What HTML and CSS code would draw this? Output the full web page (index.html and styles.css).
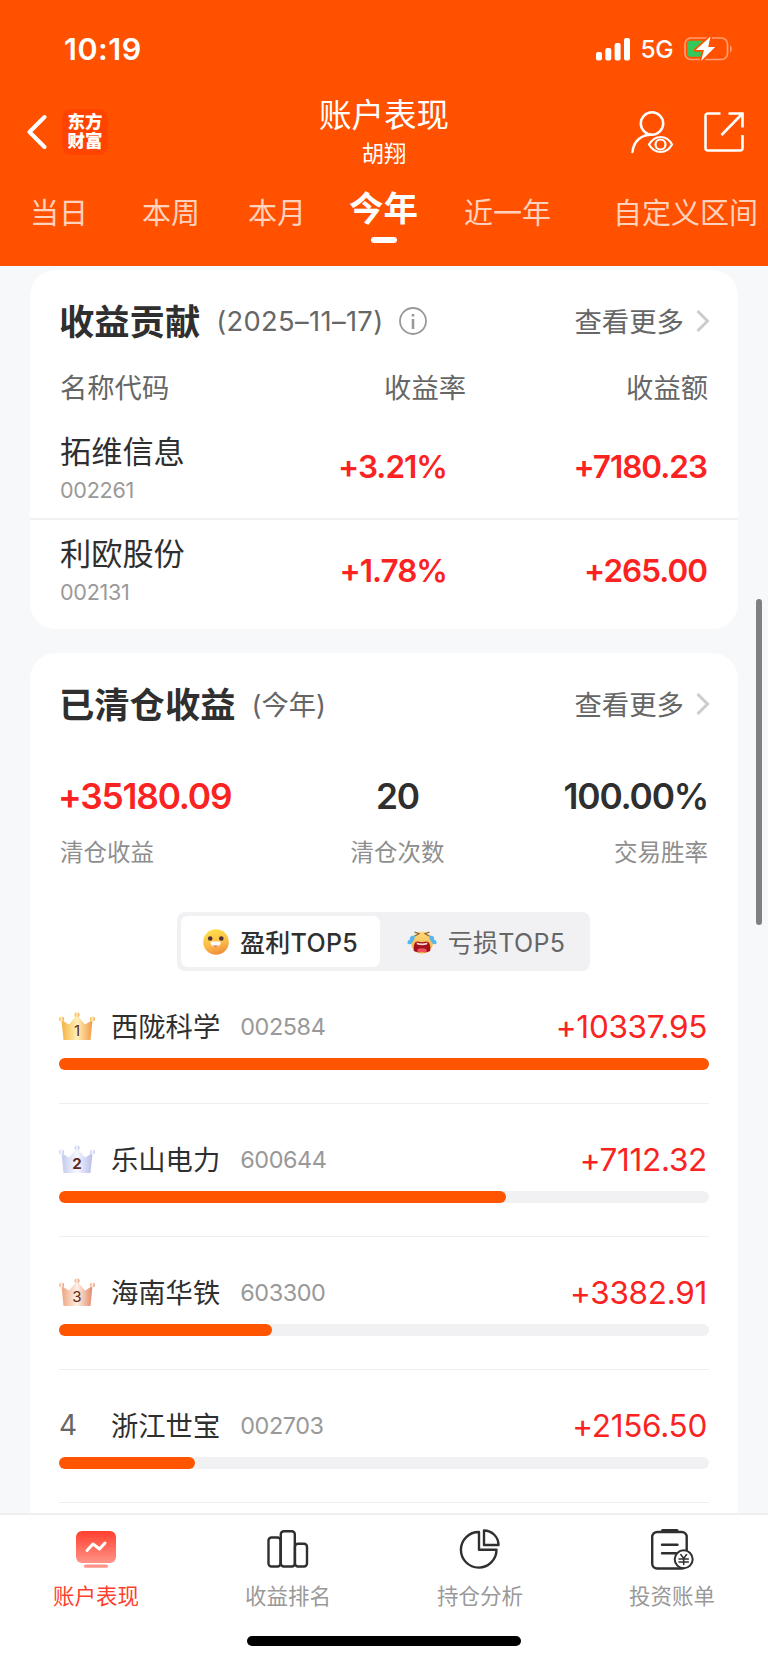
FILE: index.html
```html
<!DOCTYPE html>
<html lang="zh-CN">
<head>
    <meta charset="UTF-8">
    <meta name="viewport" content="width=device-width, initial-scale=1.0">
    <title>账户表现</title>
    <link rel="stylesheet" href="styles.css">
</head>
<body>

<div class="header">
    <div class="status-bar">
        <span class="time">10:19</span>
        <div class="status-right">
            <svg class="signal" width="34" height="23" viewBox="0 0 34 23" fill="#fff">
                <rect x="0" y="14" width="6" height="8.5" rx="2"/>
                <rect x="9.3" y="10" width="6" height="12.5" rx="2"/>
                <rect x="18.6" y="5" width="6" height="17.5" rx="2"/>
                <rect x="28" y="0" width="6" height="22.5" rx="2"/>
            </svg>
            <span class="network">5G</span>
            <svg class="battery" width="50" height="26" viewBox="0 0 50 26">
                <rect x="1" y="2" width="42.5" height="21.5" rx="6" fill="none" stroke="#fff" stroke-opacity=".45" stroke-width="1.7"/>
                <path d="M46 9.5c2.4 .8 2.4 6 0 7z" fill="#fff" fill-opacity=".45"/>
                <rect x="3.2" y="4.8" width="17" height="16" rx="3" fill="#34c759"/>
                <path d="M26.5 .5L11.7 14h8.2l-2.8 11L31.2 11h-7z" fill="#fff" stroke="#ff5100" stroke-width="3.4" stroke-linejoin="round" paint-order="stroke"/>
            </svg>
        </div>
    </div>

    <div class="title-bar">
        <div class="title-left">
            <svg width="20" height="36" viewBox="0 0 20 36" fill="none" stroke="#fff" stroke-width="4" stroke-linecap="round" stroke-linejoin="round">
                <path d="M17.5 3L2.5 18l15 15"/>
            </svg>
            <div class="logo">东方<br>财富</div>
        </div>
        <div class="title-center">
            <h1>账户表现</h1>
            <p>胡翔</p>
        </div>
        <div class="title-right">
            <svg width="44" height="44" viewBox="0 0 44 44" fill="none" stroke="#fff" stroke-width="2.5" stroke-linecap="round">
                <circle cx="22" cy="13.5" r="11.2"/>
                <path d="M2.5 42C3.5 31 11.5 24.7 21 24.7"/>
                <path d="M19 34.5C25 24.5 36.5 24.5 42 34.5C36.5 44.5 25 44.5 19 34.5z" stroke-width="2.2"/>
                <circle cx="30.5" cy="34.5" r="5" stroke-width="2.2"/>
            </svg>
            <svg width="40" height="40" viewBox="0 0 40 40" fill="none" stroke="#fff" stroke-width="2.6">
                <path d="M16.5 1.5H4Q1.5 1.5 1.5 4V36Q1.5 38.5 4 38.5H36Q38.5 38.5 38.5 36V23"/>
                <path d="M24.5 1.5H38.5V15.5M38 2L17.5 23"/>
            </svg>
        </div>
    </div>

    <div class="tabs">
        <span class="tab">当日</span>
        <span class="tab tab-week">本周</span>
        <span class="tab tab-month">本月</span>
        <span class="tab active">今年</span>
        <span class="tab tab-last-year">近一年</span>
        <span class="tab tab-custom">自定义区间</span>
    </div>
</div>

<div class="content">
    <div class="card contribution">
        <div class="card-head">
            <h2>收益贡献</h2>
            <span class="date">(2025–11–17)</span>
            <svg class="info" width="28" height="28" viewBox="0 0 28 28" fill="none" stroke="#999">
                <circle cx="14" cy="14" r="13" stroke-width="1.8"/>
                <path d="M14 12v10" stroke-width="2.6"/>
                <path d="M14 7v2.5" stroke-width="2.6"/>
            </svg>
            <span class="more">查看更多</span>
            <svg class="chevron" width="14" height="22" viewBox="0 0 14 22" fill="none" stroke="#ccc" stroke-width="3">
                <path d="M1.5 1L11.5 11l-10 10"/>
            </svg>
        </div>
        <div class="table-head">
            <span>名称代码</span>
            <span>收益率</span>
            <span>收益额</span>
        </div>
        <div class="stock">
            <div>
                <p class="stock-name">拓维信息</p>
                <p class="stock-code">002261</p>
            </div>
            <span class="stock-value">+3.21%</span>
            <span class="stock-value">+7180.23</span>
        </div>
        <div class="stock">
            <div>
                <p class="stock-name">利欧股份</p>
                <p class="stock-code">002131</p>
            </div>
            <span class="stock-value">+1.78%</span>
            <span class="stock-value">+265.00</span>
        </div>
    </div>

    <div class="card cleared">
        <div class="card-head">
            <h2>已清仓收益</h2>
            <span class="date">(今年)</span>
            <span class="more">查看更多</span>
            <svg class="chevron" width="14" height="22" viewBox="0 0 14 22" fill="none" stroke="#ccc" stroke-width="3">
                <path d="M1.5 1L11.5 11l-10 10"/>
            </svg>
        </div>
        <div class="stats">
            <div class="stat">
                <p class="stat-value red">+35180.09</p>
                <p class="stat-label">清仓收益</p>
            </div>
            <div class="stat center">
                <p class="stat-value">20</p>
                <p class="stat-label">清仓次数</p>
            </div>
            <div class="stat right">
                <p class="stat-value">100.00%</p>
                <p class="stat-label">交易胜率</p>
            </div>
        </div>

        <div class="switch">
            <div class="switch-item on">
                <svg width="26" height="26" viewBox="0 0 26 26">
                    <defs>
                        <linearGradient id="smile" x1=".35" y1="0" x2=".65" y2="1">
                            <stop offset="0" stop-color="#ffe04a"/>
                            <stop offset=".55" stop-color="#fcbc48"/>
                            <stop offset="1" stop-color="#f08a3c"/>
                        </linearGradient>
                    </defs>
                    <circle cx="13" cy="13" r="12.8" fill="url(#smile)"/>
                    <circle cx="7.2" cy="9.5" r="2.3" fill="#4a3038"/>
                    <circle cx="18.3" cy="9.5" r="2.3" fill="#4a3038"/>
                    <path d="M7.4 12.4H17.8Q17.6 18 12.6 18T7.4 12.4z" fill="#fff"/>
                    <path d="M9.2 16.5H16Q12.6 19.4 9.2 16.5z" fill="#f0604c"/>
                </svg>
                <span>盈利TOP5</span>
            </div>
            <div class="switch-item off">
                <svg width="30" height="26" viewBox="0 0 30 26">
                    <defs>
                        <linearGradient id="cry" x1="0" y1="0" x2="0" y2="1">
                            <stop offset="0" stop-color="#ffdd7b"/>
                            <stop offset="1" stop-color="#f3a83c"/>
                        </linearGradient>
                    </defs>
                    <circle cx="15" cy="13.5" r="11" fill="url(#cry)"/>
                    <path d="M7.5 3l4.5 1.7-4 2.3M22.5 3l-4.5 1.7 4 2.3" fill="none" stroke="#8a6250" stroke-width="1.3"/>
                    <path d="M6.8 22Q6 12 11 12.5Q15 14 19 12.5Q24 12 23.2 22Q19 24 15 22.8Q11 24 6.8 22z" fill="#a3121c"/>
                    <path d="M9.5 13.5Q15 15.5 20.5 13.5L20 15.5Q15 17 10 15.5z" fill="#f7d9d2"/>
                    <path d="M10 22.5Q10.500 18.6 15 19.4Q19.500 18.6 20 22.5Q15 23.5 10 22.5z" fill="#f0525a"/>
                    <path d="M8 6.5Q1.5 6.5 3.2 10.5Q-.5 11.5 .8 15Q4 16 5.3 13.5Q8 10.5 8 6.5zM22 6.5Q28.500 6.5 26.8 10.5Q30.500 11.5 29.2 15Q26 16 24.7 13.5Q22 10.5 22 6.500z" fill="#55b5f2"/>
                </svg>
                <span>亏损TOP5</span>
            </div>
        </div>

        <!-- shared crown shape, coloured per rank -->
        <svg class="defs" width="0" height="0">
            <defs>
                <linearGradient id="gold"><stop offset="0" stop-color="#f5b13e"/><stop offset=".5" stop-color="#fff0b8"/><stop offset="1" stop-color="#f39a45"/></linearGradient>
                <linearGradient id="silver"><stop offset="0" stop-color="#c3c9ec"/><stop offset=".5" stop-color="#f6f8ff"/><stop offset="1" stop-color="#b9bde9"/></linearGradient>
                <linearGradient id="bronze"><stop offset="0" stop-color="#eba480"/><stop offset=".5" stop-color="#fff0e4"/><stop offset="1" stop-color="#e28a68"/></linearGradient>
                <g id="crown">
                    <path d="M2.5 8L10 12.5L18 3L26 12.5L33.5 8L31.5 28H4.5z"/>
                    <circle cx="18" cy="2.7" r="2.5"/>
                    <circle cx="2.6" cy="7" r="2.5"/>
                    <circle cx="33.4" cy="7" r="2.5"/>
                </g>
            </defs>
        </svg>

        <div class="rank">
            <div class="rank-row">
                <div class="rank-no">
                    <svg width="36" height="29" viewBox="0 0 36 29"><use href="#crown" fill="url(#gold)"/><text x="18" y="23.5">1</text></svg>
                </div>
                <span class="rank-name">西陇科学</span>
                <span class="rank-code">002584</span>
                <span class="rank-value">+10337.95</span>
            </div>
            <div class="bar"><div class="fill" style="width: 100%"></div></div>
        </div>
        <div class="rank">
            <div class="rank-row">
                <div class="rank-no">
                    <svg width="36" height="29" viewBox="0 0 36 29"><use href="#crown" fill="url(#silver)"/><text x="18" y="23.5" class="heavy">2</text></svg>
                </div>
                <span class="rank-name">乐山电力</span>
                <span class="rank-code">600644</span>
                <span class="rank-value">+7112.32</span>
            </div>
            <div class="bar"><div class="fill" style="width: 68.8%"></div></div>
        </div>
        <div class="rank">
            <div class="rank-row">
                <div class="rank-no">
                    <svg width="36" height="29" viewBox="0 0 36 29"><use href="#crown" fill="url(#bronze)"/><text x="18" y="23.5">3</text></svg>
                </div>
                <span class="rank-name">海南华铁</span>
                <span class="rank-code">603300</span>
                <span class="rank-value">+3382.91</span>
            </div>
            <div class="bar"><div class="fill" style="width: 32.7%"></div></div>
        </div>
        <div class="rank">
            <div class="rank-row">
                <div class="rank-no">4</div>
                <span class="rank-name">浙江世宝</span>
                <span class="rank-code">002703</span>
                <span class="rank-value">+2156.50</span>
            </div>
            <div class="bar"><div class="fill" style="width: 20.9%"></div></div>
        </div>
    </div>
</div>

<div class="scrollbar"></div>

<div class="footer">
    <div class="nav">
        <div class="nav-item current">
            <svg width="44" height="44" viewBox="0 0 44 44">
                <defs>
                    <linearGradient id="nav" x1="0" y1="0" x2="0" y2="1">
                        <stop offset="0" stop-color="#ff3f2e"/>
                        <stop offset="1" stop-color="#ff9488"/>
                    </linearGradient>
                </defs>
                <rect x="2" y="3" width="40" height="32" rx="6" fill="url(#nav)"/>
                <rect x="10" y="36.5" width="24" height="3.2" rx="1.5" fill="#ff9488"/>
                <path d="M13 22.5l6-6.5 6.5 5 5.5-6" fill="none" stroke="#fff" stroke-width="3" stroke-linecap="round" stroke-linejoin="round"/>
            </svg>
            <span>账户表现</span>
        </div>
        <div class="nav-item">
            <svg width="44" height="44" viewBox="0 0 44 44" fill="none" stroke="#2f2f2f" stroke-width="2.4">
                <rect x="2.5" y="9.5" width="12" height="29" rx="3"/>
                <rect x="14.8" y="3.2" width="14" height="35.3" rx="3"/>
                <rect x="29" y="15.7" width="12" height="22.8" rx="3"/>
            </svg>
            <span>收益排名</span>
        </div>
        <div class="nav-item">
            <svg width="44" height="44" viewBox="0 0 44 44" fill="none" stroke="#2f2f2f" stroke-width="2.4" stroke-linejoin="round">
                <path d="M21 4A17.8 17.8 0 1 0 38.5 21.8H21z"/>
                <path d="M26 2.5A14.5 14.5 0 0 1 40.5 17H26z"/>
            </svg>
            <span>持仓分析</span>
        </div>
        <div class="nav-item">
            <svg width="44" height="44" viewBox="0 0 44 44" fill="none" stroke="#2f2f2f" stroke-width="2.4" stroke-linecap="round">
                <path d="M12.5 2.6h14.5" stroke-width="3"/>
                <rect x="2.2" y="4" width="34.5" height="36.5" rx="5"/>
                <path d="M12 16.8h15.5M12 25.2h14"/>
                <circle cx="33.7" cy="31.3" r="9" fill="#fff" stroke-width="2"/>
                <path d="M30.8 26.5l2.9 4 2.9-4M33.7 30.5v6M29 31h9.4M29 34h9.4" stroke-width="1.5"/>
            </svg>
            <span>投资账单</span>
        </div>
    </div>
    <div class="home-indicator"></div>
</div>

</body>
</html>
```

FILE: styles.css
```css
* {
    box-sizing: border-box;
}
body {
    margin: 0;
    width: 768px;
    height: 1663px;
    overflow: hidden;
    display: flex;
    flex-direction: column;
    position: relative;
    background-color: #f7f8fa;
    color: #2f2f2f;
    font-family: Inter, "Noto Sans CJK SC", sans-serif;
}
h1, h2, p {
    margin: 0;
    font-weight: normal;
}
svg {
    display: block;
    flex-shrink: 0;
}

/* header */
.header {
    height: 266px;
    flex-shrink: 0;
    background-color: #ff5100;
    color: #fff;
}
.status-bar {
    height: 92px;
    display: flex;
    justify-content: space-between;
    align-items: center;
    padding: 6px 34px 0 64px;
}
.time {
    padding-bottom: 2px;
    font-size: 30.5px;
    font-weight: 600;
    letter-spacing: 0.5px;
}
.status-right {
    display: flex;
    align-items: center;
}
.network {
    margin: 0 11px 0 11px;
    font-size: 24.5px;
    font-weight: 500;
    letter-spacing: -0.5px;
}
.title-bar {
    height: 78px;
    display: grid;
    grid-template-columns: 1fr auto 1fr;
    align-items: center;
    padding: 0 24px;
}
.title-left {
    display: flex;
    align-items: center;
    gap: 15px;
    padding-left: 3px;
}
.logo {
    width: 46px;
    height: 46px;
    padding-top: 3px;
    border-radius: 9px;
    background-color: #ff4400;
    font-size: 17.5px;
    font-weight: 900;
    line-height: 19px;
    text-align: center;
}
.title-center {
    padding-top: 4px;
    text-align: center;
}
.title-center h1 {
    font-size: 32.5px;
    line-height: 40px;
}
.title-center p {
    font-size: 22.3px;
    line-height: 36px;
}
.title-right {
    display: flex;
    justify-content: flex-end;
    align-items: center;
    gap: 30px;
}
.tabs {
    height: 96px;
    display: flex;
    align-items: flex-start;
    padding: 22px 0 0 30px;
    white-space: nowrap;
}
.tab {
    font-size: 29px;
    line-height: 43px;
    color: #ffd2be;
}
.tab-week {
    margin-left: 54px;
}
.tab-month {
    margin-left: 48px;
}
.tab-last-year {
    margin-left: 46px;
}
.tab-custom {
    margin-left: 62px;
}
.tab.active {
    display: flex;
    flex-direction: column;
    align-items: center;
    margin-left: 43px;
    font-size: 34.5px;
    font-weight: 700;
    line-height: 34px;
    color: #fff;
}
.tab.active::after {
    content: "";
    width: 26px;
    height: 6px;
    margin-top: 11px;
    border-radius: 3px;
    background-color: #fff;
}

/* cards */
.content {
    flex: 1;
    min-height: 0;
    overflow: hidden;
    padding: 4px 30px 0;
}
.card {
    border-radius: 26px;
    background-color: #fff;
}
.contribution {
    height: 359px;
    margin-bottom: 24px;
}
.cleared {
    height: 900px;
}
.card-head {
    height: 102px;
    display: flex;
    align-items: center;
    padding: 0 28px 0 29px;
}
.card-head h2 {
    padding-bottom: 4px;
    font-size: 35.3px;
    font-weight: 700;
}
.date {
    margin-left: 16px;
    font-size: 27.3px;
    letter-spacing: 0.35px;
    color: #666;
}
.cleared .date {
    padding-bottom: 3px;
    letter-spacing: 0;
}
.info {
    margin-left: 16px;
}
.more {
    margin-left: auto;
    padding-bottom: 2px;
    font-size: 27.4px;
    color: #666;
}
.chevron {
    margin-left: 12px;
}
.table-head {
    height: 44px;
    margin: -5px 0 3px;
    display: grid;
    grid-template-columns: 190px 216px 1fr;
    padding: 0 30px;
    font-size: 27.3px;
    line-height: 44px;
    color: #666;
}
.table-head span + span {
    text-align: right;
}
.stock {
    height: 104px;
    display: grid;
    grid-template-columns: 190px 197px 1fr;
    align-items: center;
    padding: 0 31px 0 30px;
}
.table-head + .stock > div {
    padding-top: 3px;
}
.stock + .stock {
    padding-bottom: 2px;
    border-top: 2px solid #f1f1f3;
}
.stock-name {
    font-size: 31.2px;
    line-height: 44px;
}
.stock-code {
    font-size: 21.6px;
    line-height: 32px;
    letter-spacing: -0.3px;
    color: #999;
}
.stock-value {
    font-size: 31.5px;
    font-weight: 600;
    letter-spacing: -1px;
    text-align: right;
    color: #fa2322;
}
.stats {
    display: flex;
    justify-content: space-between;
    padding: 16px 30px 0;
}
.center {
    text-align: center;
}
.right {
    text-align: right;
}
.stat-value {
    font-size: 35.3px;
    font-weight: 600;
    letter-spacing: -1.2px;
    line-height: 52px;
}
.stat-label {
    margin-top: 13px;
    font-size: 23.5px;
    line-height: 34px;
    color: #8e8e8e;
}
.red {
    margin-left: -2px;
    color: #fa2322;
}
.switch {
    width: 413px;
    height: 59px;
    display: flex;
    margin: 42px auto 0 147px;
    padding: 4px;
    border-radius: 8px;
    background-color: #f1f1f4;
}
.switch-item {
    flex: 1;
    display: flex;
    align-items: center;
    justify-content: center;
    gap: 11px;
    border-radius: 7px;
    font-size: 25px;
    letter-spacing: 0.3px;
    color: #666;
}
.switch-item span {
    padding-bottom: 2px;
}
.switch-item.on {
    flex: 0 0 199px;
    background-color: #fff;
    font-weight: 500;
    color: #2f2f2f;
}
.switch-item.off {
    padding-left: 6px;
}
.defs {
    position: absolute;
}

/* ranking */
.rank {
    height: 133px;
    margin: 0 29px;
    padding-top: 33px;
    border-bottom: 1px solid #eeeef0;
}
.rank-row {
    height: 44px;
    display: flex;
    align-items: center;
}
.rank-no {
    width: 52px;
    font-size: 28px;
    color: #666;
}
.rank-no text {
    font-size: 15px;
    text-anchor: middle;
    fill: #5e2a1c;
}
.rank-no .heavy {
    font-weight: 700;
}
.rank-name {
    padding-bottom: 2px;
    font-size: 27.3px;
}
.rank-code {
    margin-left: 20px;
    font-size: 23.4px;
    letter-spacing: -0.4px;
    color: #999;
}
.rank-value {
    margin-left: auto;
    padding-right: 2px;
    font-size: 31.5px;
    letter-spacing: -0.3px;
    color: #fa2322;
}
.bar {
    height: 12px;
    margin-top: 10px;
    border-radius: 6px;
    background-color: #f1f1f4;
}
.fill {
    height: 12px;
    border-radius: 6px;
    background-color: #ff5500;
}

.scrollbar {
    position: absolute;
    top: 599px;
    right: 6px;
    width: 6px;
    height: 326px;
    border-radius: 3px;
    background-color: #7f8082;
}

/* bottom navigation */
.footer {
    height: 150px;
    flex-shrink: 0;
    display: flex;
    flex-direction: column;
    align-items: center;
    border-top: 2px solid #eeeff1;
    background-color: #fff;
}
.nav {
    width: 100%;
    display: flex;
    padding-top: 13px;
}
.nav-item {
    flex: 1;
    display: flex;
    flex-direction: column;
    align-items: center;
    gap: 8px;
    font-size: 21.5px;
    line-height: 32px;
    color: #999;
}
.nav-item.current {
    color: #ff3f2e;
}
.home-indicator {
    width: 274px;
    height: 10px;
    margin-top: 24px;
    border-radius: 5px;
    background-color: #000;
}
```
